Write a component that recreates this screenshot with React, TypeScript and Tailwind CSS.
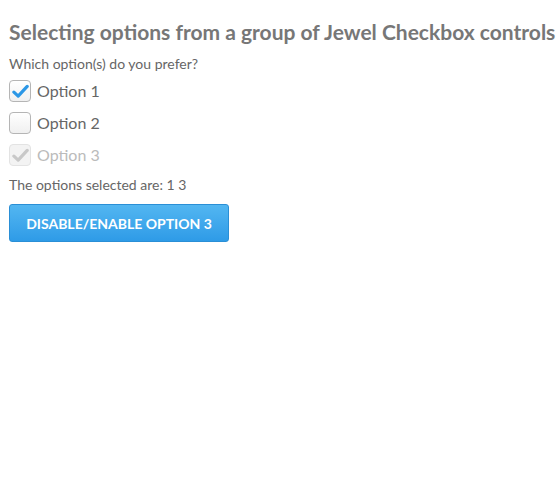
import React, { useState } from "react";

function Box({ checked, disabled }: { checked: boolean; disabled?: boolean }) {
  return (
    <span
      className={
        "flex h-[22px] w-[22px] shrink-0 items-center justify-center rounded-[4px] border " +
        (disabled ? "border-[#e3e3e3] bg-[#f3f3f3]" : "border-[#b5b5b5] bg-gradient-to-b from-white to-[#f0f0f0]")
      }
    >
      {checked && (
        <svg width="17" height="15" viewBox="0 0 16 14">
          <path
            d="M1.8 7.6 L5.8 11.3 L14.3 2.2"
            fill="none"
            stroke={disabled ? "#c8c8c8" : "#2b97e6"}
            strokeWidth="3"
            strokeLinecap="round"
            strokeLinejoin="round"
          />
        </svg>
      )}
    </span>
  );
}

export default function App() {
  const [sel, setSel] = useState<number[]>([1, 3]);
  const [dis, setDis] = useState(true);
  const toggle = (n: number) => {
    if (n === 3 && dis) return;
    setSel((s) => (s.includes(n) ? s.filter((x) => x !== n) : [...s, n].sort()));
  };
  return (
    <div className="px-[9px] pt-[19px] text-[#666]" style={{ fontFamily: "Lato, 'Liberation Sans', sans-serif" }}>
      <h1 className="text-[21px] font-bold leading-[26px] text-[#777] whitespace-nowrap">
        Selecting options from a group of Jewel Checkbox controls
      </h1>
      <p className="mt-[10px] text-[14px] leading-[17px]">Which option(s) do you prefer?</p>
      <div className="mt-[8px] flex flex-col gap-[10px]">
        {[1, 2, 3].map((n) => {
          const d = n === 3 && dis;
          return (
            <label key={n} className="flex h-[22px] items-center gap-[6px] cursor-pointer" onClick={() => toggle(n)}>
              <Box checked={sel.includes(n)} disabled={d} />
              <span className={"text-[16px] leading-[22px] " + (d ? "text-[#bbb]" : "text-[#666]")}>Option {n}</span>
            </label>
          );
        })}
      </div>
      <p className="mt-[10px] text-[14px] leading-[17px]">The options selected are: {sel.join(" ")}</p>
      <button
        onClick={() => setDis(!dis)}
        className="mt-[11px] block h-[38px] w-[220px] rounded-[3px] border border-[#2a8fd6] bg-gradient-to-b from-[#52b6f1] to-[#2e9be7] text-[14px] font-bold text-white"
      >
        DISABLE/ENABLE OPTION 3
      </button>
    </div>
  );
}
